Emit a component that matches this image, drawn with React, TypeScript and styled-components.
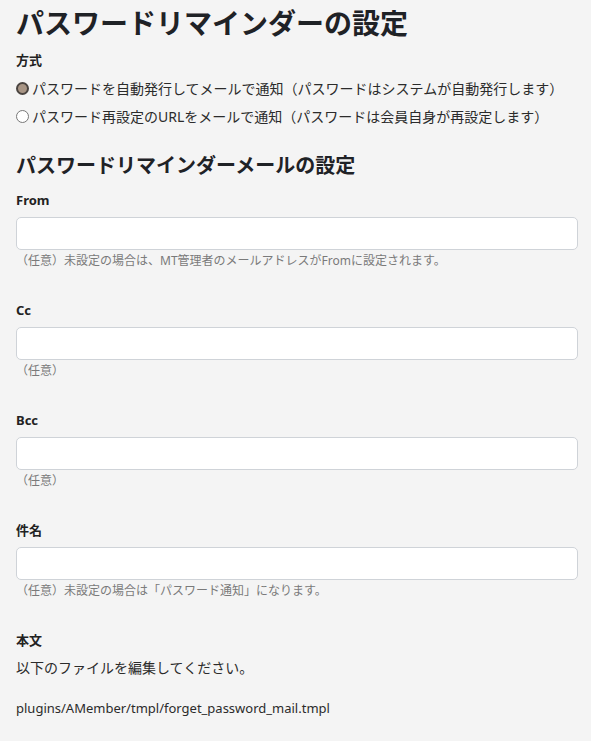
import { createGlobalStyle, styled } from "styled-components";

const GlobalStyle = createGlobalStyle`
  body {
    margin: 0;
    background: #f4f4f4;
    font-family: "Noto Sans", "Noto Sans CJK JP", sans-serif;
    color: #2b2b2b;
  }
`;

interface Field {
  label: string;
  hint: string;
}

const fields: Field[] = [
  { label: "From", hint: "（任意）未設定の場合は、MT管理者のメールアドレスがFromに設定されます。" },
  { label: "Cc", hint: "（任意）" },
  { label: "Bcc", hint: "（任意）" },
  { label: "件名", hint: "（任意）未設定の場合は「パスワード通知」になります。" },
];

export default function App() {
  return (
    <>
      <GlobalStyle />
      <Page>
        <Title>パスワードリマインダーの設定</Title>
        <Label $top={10}>方式</Label>
        <RadioList>
          <RadioRow>
            <Radio type="radio" name="method" defaultChecked />
            パスワードを自動発行してメールで通知（パスワードはシステムが自動発行します）
          </RadioRow>
          <RadioRow>
            <Radio type="radio" name="method" />
            パスワード再設定のURLをメールで通知（パスワードは会員自身が再設定します）
          </RadioRow>
        </RadioList>
        <SubTitle>パスワードリマインダーメールの設定</SubTitle>
        {fields.map((f, i) => (
          <FieldGroup key={f.label} $first={i === 0}>
            <Label $top={0}>{f.label}</Label>
            <TextInput type="text" />
            <Hint>{f.hint}</Hint>
          </FieldGroup>
        ))}
        <FieldGroup $first={false}>
          <Label $top={0}>本文</Label>
          <BodyText>以下のファイルを編集してください。</BodyText>
          <PathText>plugins/AMember/tmpl/forget_password_mail.tmpl</PathText>
        </FieldGroup>
      </Page>
    </>
  );
}

const Page = styled.div`
  display: flex;
  flex-direction: column;
  padding: 6px 13px 20px 16px;
`;

const Title = styled.h1`
  margin: 0;
  font-size: 28px;
  line-height: 34px;
  font-weight: 700;
  color: #1f2226;
`;

const SubTitle = styled.h2`
  margin: 22px 0 0;
  font-size: 20px;
  line-height: 28px;
  font-weight: 700;
  color: #1f2226;
`;

const Label = styled.div<{ $top: number }>`
  margin-top: ${(p) => p.$top}px;
  font-size: 13px;
  line-height: 20px;
  font-weight: 700;
  color: #222;
`;

const RadioList = styled.div`
  display: flex;
  flex-direction: column;
  margin-top: 4px;
`;

const RadioRow = styled.label`
  display: flex;
  align-items: center;
  height: 28px;
  font-size: 14px;
  color: #2b2b2b;
`;

const Radio = styled.input`
  appearance: none;
  width: 13px;
  height: 13px;
  margin: 0 3px 0 0;
  border: 1px solid #777;
  border-radius: 50%;
  background: #fff;
  box-sizing: border-box;

  &:checked {
    border: 2px solid #4a4440;
    background: #a89585;
  }
`;

const FieldGroup = styled.div<{ $first: boolean }>`
  display: flex;
  flex-direction: column;
  margin-top: ${(p) => (p.$first ? 10 : 31)}px;
`;

const TextInput = styled.input`
  margin-top: 7px;
  height: 33px;
  box-sizing: border-box;
  border: 1px solid #cfd3d8;
  border-radius: 5px;
  background: #fff;
  padding: 0 10px;
  font-size: 14px;
  outline: none;
`;

const Hint = styled.div`
  margin-top: 3px;
  font-size: 12px;
  line-height: 16px;
  color: #7a7a7a;
`;

const BodyText = styled.div`
  margin-top: 8px;
  font-size: 14px;
  line-height: 20px;
  color: #2b2b2b;
`;

const PathText = styled.div`
  margin-top: 21px;
  font-size: 13px;
  line-height: 18px;
  color: #2b2b2b;
`;
